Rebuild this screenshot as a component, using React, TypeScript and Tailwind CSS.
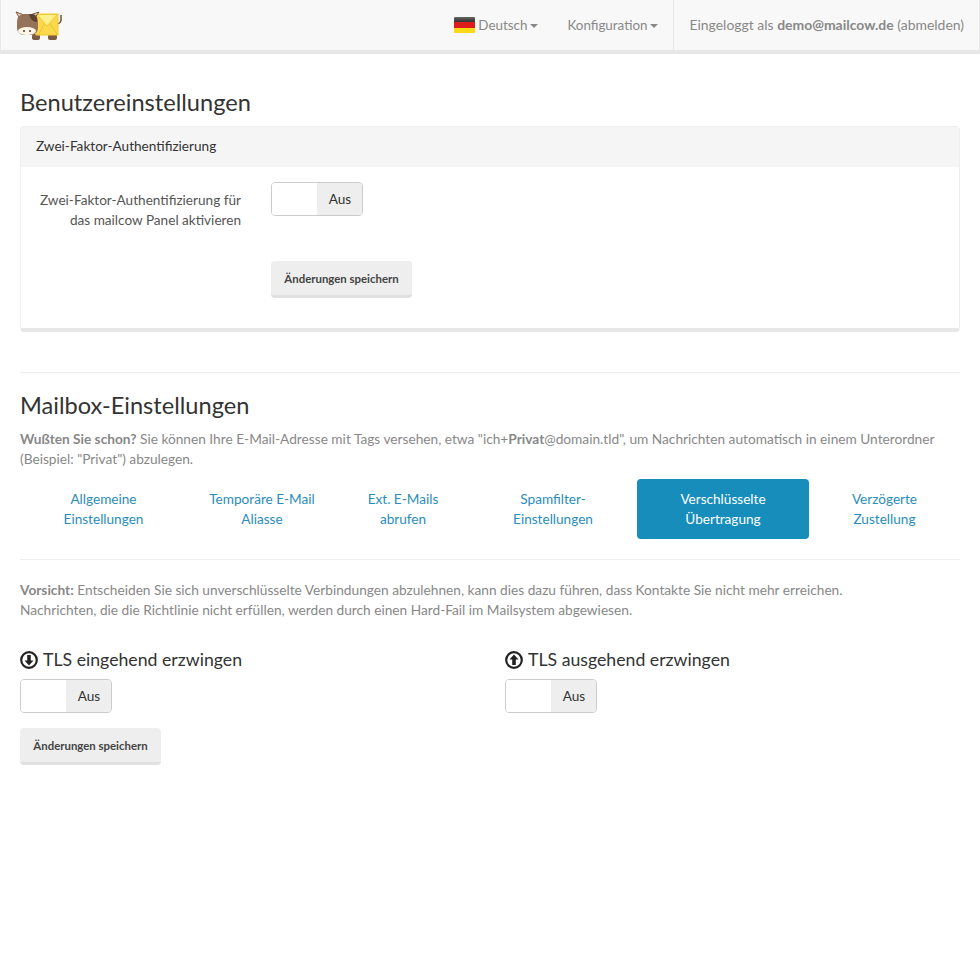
import React from 'react';

const FONT = "font-['Lato','Noto_Sans',sans-serif]";

const tabs = [
  ['Allgemeine', 'Einstellungen'],
  ['Temporäre E-Mail', 'Aliasse'],
  ['Ext. E-Mails', 'abrufen'],
  ['Spamfilter-', 'Einstellungen'],
  ['Verschlüsselte', 'Übertragung'],
  ['Verzögerte', 'Zustellung'],
];

const Logo = () => (
  <svg width="50" height="30" viewBox="0 0 50 30">
    <path d="M42 14 q5 -1 4 -6 l0 -3" fill="none" stroke="#6b5140" strokeWidth="1.500" />
    <circle cx="47" cy="3" r="1.500" fill="#fbf3dc" />
    <rect x="17" y="24" width="8" height="6" rx="2" fill="#7a5a44" />
    <rect x="33" y="24" width="9" height="6" rx="2" fill="#7a5a44" />
    <rect x="21" y="4" width="22" height="21" fill="#fbd84c" stroke="#f4c92e" />
    <path d="M22 4.500 L32 16 L42.500 4.500 Z" fill="#fdf08a" stroke="#f0c830" />
    <path d="M24 24 L29 14 M42 24 L35 14" stroke="#eec22c" fill="none" />
    <path d="M1 2 L5 9 L9 5 Z" fill="#ead2bc" stroke="#7a5a44" />
    <path d="M24 2 L19 9 L15 5 Z" fill="#ead2bc" stroke="#7a5a44" />
    <rect x="2" y="4" width="21" height="21" rx="7" fill="#95735a" />
    <path d="M14 4 h3 a5 5 0 0 1 5 5 v3 q-6 0 -8 -8z" fill="#5c4030" />
    <ellipse cx="12" cy="21" rx="9" ry="4" fill="#fdf5e6" />
    <circle cx="9" cy="21" r="1" fill="#4a3528" />
    <circle cx="15" cy="21" r="1" fill="#4a3528" />
  </svg>
);

const Flag = () => (
  <span className="flex flex-col w-[21px] h-4 mr-[3px] overflow-hidden rounded-[1px]">
    <span className="h-[5px] bg-gradient-to-b from-[#666] to-[#333]" />
    <span className="h-[6px] bg-[#dd1c1c]" />
    <span className="h-[5px] bg-[#fbd914]" />
  </span>
);

const Caret = () => (
  <span className="ml-[3px] mt-[2px] w-0 h-0 border-x-4 border-x-transparent border-t-4 border-t-[#888]" />
);

const Toggle = () => (
  <div className="flex w-[92px] h-[34px] rounded border border-[#ccc] overflow-hidden">
    <div className="w-[45px] bg-white" />
    <div className="flex-1 bg-[#eee] flex items-center justify-center pl-[1px] text-[#333]">Aus</div>
  </div>
);

const SaveButton = () => (
  <button className="w-[141px] h-[37px] pt-[1px] bg-[#eee] rounded border-b-[3px] border-[#e0e0e0] text-[11.4px] font-bold text-[#444]">
    Änderungen speichern
  </button>
);

const CircleArrow = ({ up }: { up?: boolean }) => (
  <svg width="18" height="18" viewBox="0 0 18 18" className="mr-[5px]">
    <circle cx="9" cy="9" r="7.800" fill="#fff" stroke="#222" strokeWidth="2.200" />
    <path
      d={up ? 'M9 3.500 L13.500 8.500 H10.800 V14 H7.200 V8.500 H4.500 Z' : 'M9 14.500 L13.500 9.500 H10.800 V4 H7.200 V9.500 H4.500 Z'}
      fill="#222"
    />
  </svg>
);

const App: React.FC = () => {
  return (
    <div className={`${FONT} text-[13.6px] leading-5 text-[#333] bg-white min-h-[962px]`}>
      <nav className="h-[54px] bg-[#f8f8f8] border-x border-b-4 border-[#e7e7e7] flex items-center justify-between text-[#888]">
        <div className="pl-[14px]">
          <Logo />
        </div>
        <div className="flex items-center h-full text-[13.4px]">
          <a className="flex items-center pr-[14px]">
            <Flag />
            Deutsch
            <Caret />
          </a>
          <a className="flex items-center px-[15px]">
            Konfiguration
            <Caret />
          </a>
          <div className="flex items-center h-full px-[15px] border-l border-[#e7e7e7] text-[13.95px]">
            <span>
              Eingeloggt als <b>demo@mailcow.de</b> (abmelden)
            </span>
          </div>
        </div>
      </nav>

      <main className="px-5">
        <h2 className="text-[23.6px] leading-[26px] mt-[35px] mb-[11px] text-[#333]">Benutzereinstellungen</h2>
        <section className="h-[206px] border border-[#eee] border-b-4 border-b-[#e7e7e7] rounded">
          <div className="h-[40px] bg-[#f5f5f5] flex items-center px-[15px] pb-[2px]">Zwei-Faktor-Authentifizierung</div>
          <div className="flex pt-[15px]">
            <div className="w-[220px] pt-[8px] text-right text-[#555]">
              Zwei-Faktor-Authentifizierung für
              <br />
              das mailcow Panel aktivieren
            </div>
            <div className="ml-[30px] flex flex-col items-start gap-[45px]">
              <Toggle />
              <SaveButton />
            </div>
          </div>
        </section>

        <hr className="mt-10 border-[#eee]" />

        <h2 className="text-[23.6px] leading-[26px] mt-[19px] mb-[11px] text-[#333]">Mailbox-Einstellungen</h2>
        <p className="text-[13.7px] text-[#888]">
          <b>Wußten Sie schon?</b> Sie können Ihre E-Mail-Adresse mit Tags versehen, etwa "ich+<b>Privat</b>@domain.tld", um Nachrichten automatisch in einem Unterordner (Beispiel: "Privat") abzulegen.
        </p>

        <div className="grid grid-cols-[167px_150px_132px_168px_172px_151px] mt-[10px]">
          {tabs.map((t, i) => (
            <a
              key={t[0]}
              className={`h-[60px] flex items-center justify-center text-center rounded ${
                i === 4 ? 'bg-[#168dbb] text-white' : 'text-[#2a8dbb]'
              }`}
            >
              <span>
                {t[0]}
                <br />
                {t[1]}
              </span>
            </a>
          ))}
        </div>

        <hr className="mt-5 border-[#eee]" />

        <p className="mt-5 text-[13.7px] text-[#888]">
          <b>Vorsicht:</b> Entscheiden Sie sich unverschlüsselte Verbindungen abzulehnen, kann dies dazu führen, dass Kontakte Sie nicht mehr erreichen.
          <br />
          Nachrichten, die die Richtlinie nicht erfüllen, werden durch einen Hard-Fail im Mailsystem abgewiesen.
        </p>

        <div className="grid grid-cols-2 gap-x-[30px] mt-[30px]">
          <div>
            <h4 className="flex items-center text-[17.7px] leading-5 mb-[9px]">
              <CircleArrow />
              TLS eingehend erzwingen
            </h4>
            <Toggle />
          </div>
          <div>
            <h4 className="flex items-center text-[17.7px] leading-5 mb-[9px]">
              <CircleArrow up />
              TLS ausgehend erzwingen
            </h4>
            <Toggle />
          </div>
        </div>

        <div className="mt-[15px]">
          <SaveButton />
        </div>
      </main>
    </div>
  );
};

export default App;
